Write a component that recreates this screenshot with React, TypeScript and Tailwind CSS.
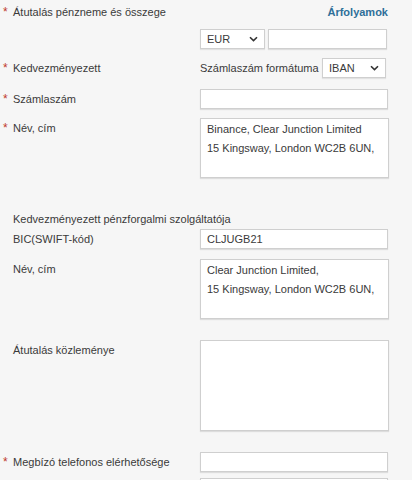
import React from "react";

const font = { fontFamily: '"Liberation Sans", Arial, sans-serif' };

function Label({ text, required }: { text: string; required?: boolean }) {
  return (
    <div className="flex w-[197px] shrink-0 whitespace-nowrap leading-[20px]">
      <span className="w-[10px] shrink-0 text-[12px] text-[#c0392b]">{required ? "*" : ""}</span>
      <span>{text}</span>
    </div>
  );
}

function Chevron() {
  return (
    <svg width="9" height="6" viewBox="0 0 9 6" className="ml-auto">
      <path d="M1 1.2 L4.5 4.6 L8 1.2" fill="none" stroke="#333" strokeWidth="1.6" />
    </svg>
  );
}

function SelectBox({ value, className }: { value: string; className: string }) {
  return (
    <div
      className={`flex h-[20px] items-center border border-[#cfcfcf] bg-white pl-[6px] pr-[6px] shadow-[0_1px_1px_rgba(0,0,0,0.08)] ${className}`}
    >
      <span>{value}</span>
      <Chevron />
    </div>
  );
}

function TextInput({ value, className = "w-[188px]" }: { value?: string; className?: string }) {
  return (
    <div
      className={`flex h-[20px] items-center border border-[#cfcfcf] bg-white px-[6px] shadow-[0_1px_1px_rgba(0,0,0,0.1)] ${className}`}
    >
      {value}
    </div>
  );
}

function TextArea({ lines, height }: { lines: string[]; height: string }) {
  return (
    <div
      className={`w-[189px] whitespace-nowrap border border-[#cfcfcf] bg-white px-[6px] pt-[1px] leading-[19px] shadow-[0_1px_1px_rgba(0,0,0,0.1)] ${height}`}
    >
      {lines.map((l) => (
        <div key={l}>{l}</div>
      ))}
    </div>
  );
}

export default function App() {
  return (
    <div className="h-[480px] w-[412px] overflow-hidden bg-[#f6f6f6] pl-[3px] text-[11px] text-[#3a3a3a]" style={font}>
      <div className="flex h-[24px] items-center">
        <Label text="Átutalás pénzneme és összege" required />
        <div className="flex w-[188px] justify-end">
          <span className="font-bold text-[#2e6f99]">Árfolyamok</span>
        </div>
      </div>

      <div className="mt-[5px] flex">
        <div className="w-[197px]" />
        <SelectBox value="EUR" className="w-[65px]" />
        <TextInput className="ml-[3px] w-[119px]" />
      </div>

      <div className="mt-[9px] flex items-center">
        <Label text="Kedvezményezett" required />
        <span className="w-[122px] whitespace-nowrap">Számlaszám formátuma</span>
        <SelectBox value="IBAN" className="w-[64px]" />
      </div>

      <div className="mt-[11px] flex">
        <Label text="Számlaszám" required />
        <TextInput />
      </div>

      <div className="mt-[9px] flex">
        <Label text="Név, cím" required />
        <TextArea lines={["Binance, Clear Junction Limited", "15 Kingsway, London WC2B 6UN,"]} height="h-[60px]" />
      </div>

      <div className="mt-[31px] flex">
        <Label text="Kedvezményezett pénzforgalmi szolgáltatója" />
      </div>

      <div className="flex">
        <Label text="BIC(SWIFT-kód)" />
        <TextInput value="CLJUGB21" />
      </div>

      <div className="mt-[10px] flex">
        <Label text="Név, cím" />
        <TextArea lines={["Clear Junction Limited,", "15 Kingsway, London WC2B 6UN,"]} height="h-[60px]" />
      </div>

      <div className="mt-[21px] flex">
        <Label text="Átutalás közleménye" />
        <TextArea lines={[]} height="h-[91px]" />
      </div>

      <div className="mt-[21px] flex">
        <Label text="Megbízó telefonos elérhetősége" required />
        <TextInput />
      </div>

      <div className="mt-[6px] flex">
        <div className="w-[197px]" />
        <TextInput />
      </div>
    </div>
  );
}
